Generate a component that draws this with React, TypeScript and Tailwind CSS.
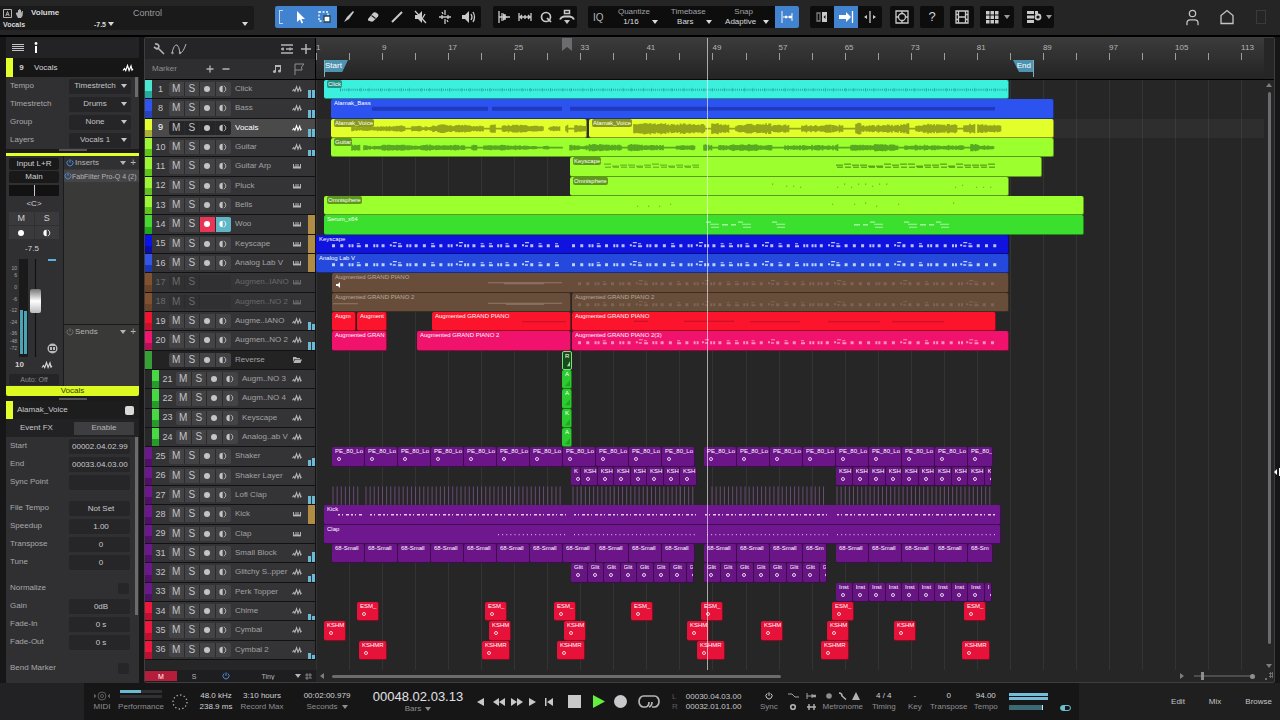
import { useState } from 'react'
import type { ReactNode } from 'react'
import { User } from 'lucide-react'

// Lanes are laid out on a 948 unit wide time axis that starts at bar 1
const LANE_WIDTH = 948
const BAR = 8.26

const pct = (n: number) => `${(n / LANE_WIDTH) * 100}%`
const noise = (n: number) => {
  const v = Math.sin(n * 12.9898) * 43758.5453
  return v - Math.floor(v)
}

type Clip = {
  x: number
  w: number
  label: string
  boxed?: boolean
  loop?: boolean
  muted?: boolean
  outline?: boolean
}

type Track = {
  num: string
  name: string
  kind: 'audio' | 'midi' | 'folder'
  strip: string
  base: string
  clip: string
  clips: Clip[]
  art?: ReactNode
  meter?: 'blue' | 'gold'
  levels?: [string, string]
  selected?: boolean
  armed?: boolean
  muted?: boolean
  indent?: boolean
}

function repeat(start: number, step: number, count: number, label: string, lastWidth = step, lastLabel = label): Clip[] {
  return Array.from({ length: count }, (_, i) => ({
    x: start + i * step,
    w: i === count - 1 ? lastWidth : step,
    label: i === count - 1 ? lastLabel : label,
    loop: true,
  }))
}

function at(xs: number[], w: number, label: string): Clip[] {
  return xs.map((x) => ({ x, w, label, loop: true }))
}

function Art({ children }: { children: ReactNode }) {
  return (
    <svg className="pointer-events-none absolute inset-0 h-full w-full" viewBox="0 0 948 19" preserveAspectRatio="none" aria-hidden="true">
      {children}
    </svg>
  )
}

function Wave({ from, to, amp, color, seed }: { from: number; to: number; amp: number; color: string; seed: number }) {
  let d = ''
  for (let x = from; x < to; x += 1.5) {
    const swell = noise(Math.floor(x / 13) + seed)
    const gap = noise(Math.floor(x / 6) + seed * 3) < 0.12
    const h = gap ? 0.8 : amp * (0.35 + 0.45 * swell + 0.35 * noise(x + seed))
    d += `M${x} ${9.5 - h}V${9.5 + h}`
  }
  return <path d={d} stroke={color} strokeWidth="1.6" fill="none" />
}

function Notes({ from, to, color, y = 10, step = BAR }: { from: number; to: number; color: string; y?: number; step?: number }) {
  let d = ''
  let i = 0
  for (let x = from; x < to; x += step) {
    const n = noise(i * 1.7 + 3)
    if (i % 8 === 7) d += `M${x} ${y - 1}h2v2h-2zM${x + 3} ${y - 3}h4v1h-4zM${x + 3} ${y}h3v1.5h-3z`
    else if (n > 0.8) d += `M${x} ${y - 1}h2v3h-2zM${x + 3} ${y - 1}h2v3h-2z`
    else if (n > 0.4) d += `M${x} ${y - 1}h3v3h-3z`
    else d += `M${x} ${y - 2}h3v1h-3zM${x} ${y}h4v2h-4z`
    i++
  }
  return <path d={d} fill={color} />
}

function Dashes({ from, to, color, y }: { from: number; to: number; color: string; y: number }) {
  let d = ''
  for (let x = from; x < to; x += 8) {
    const o = Math.floor(noise(x) * 3)
    d += `M${x} ${y + o - 1}h7M${x + 1} ${y + 2}h6`
  }
  return <path d={d} stroke={color} strokeWidth="0.9" />
}

function Specks({ from, to, color, y = 9, step = 7 }: { from: number; to: number; color: string; y?: number; step?: number }) {
  let d = ''
  for (let x = from; x < to; x += step) {
    if (noise(x * 2) > 0.35) d += `M${x} ${y + Math.floor(noise(x) * 4) - 2}h1.2`
  }
  return <path d={d} stroke={color} strokeWidth="1" />
}

function Motif({ xs }: { xs: number[] }) {
  const d = xs.map((x) => `M${x} 7h5M${x + 4} 9h9M${x + 5} 12h8`).join('')
  return <path d={d} stroke="#a6f5a0" strokeWidth="1" />
}

function Slices() {
  const spans = [[17, 42], [50, 247], [257, 379], [396, 511], [521, 677]]
  let d = ''
  for (const [a, b] of spans) {
    for (let x = a; x < b; x += 4.13) d += `M${x} 0.5v18`
  }
  return <path d={d} stroke="#74507e" strokeWidth="1" opacity="0.9" />
}

const tracks: Track[] = [
  { num: '1', name: 'Click', kind: 'audio', strip: 'bg-[#4be6d2]', base: 'bg-[#28a79b]', clip: 'bg-[#3cf0de]', meter: 'blue', levels: ['h-2', 'h-2'],
    clips: [{ x: 8, w: 685, label: 'Click', boxed: true }],
    art: <Art><path d="M24 9.500h667" stroke="#1f8a90" strokeWidth="2" strokeDasharray="1 1.1" opacity="0.700" /><path d="M24 9.500h667" stroke="#1f8a90" strokeWidth="4" strokeDasharray="1 7.2 1 11" opacity="0.400" /></Art> },
  { num: '8', name: 'Bass', kind: 'audio', strip: 'bg-[#2f55ee]', base: 'bg-[#2443bd]', clip: 'bg-[#2c52f0]', meter: 'blue', levels: ['h-2', 'h-2'],
    clips: [{ x: 15, w: 723, label: 'Alamak_Bass' }],
    art: <Art><path d="M56 9.500h116M176 9.500h70M254 9.500h140" stroke="#1e3abf" strokeWidth="4" /><path d="M394 9.500h285" stroke="#1e3abf" strokeWidth="3.400" /></Art> },
  { num: '9', name: 'Vocals', kind: 'audio', strip: 'bg-[#e4ff2e]', base: 'bg-[#a9b32d]', clip: 'bg-[#e2ff2c]', meter: 'blue', levels: ['h-2', 'h-2'], selected: true,
    clips: [{ x: 15, w: 256, label: 'Alamak_Voice', boxed: true }, { x: 273, w: 465, label: 'Alamak_Voice', boxed: true }],
    art: <Art><Wave from={36} to={122} amp={3} color="#94a61a" seed={4} /><Wave from={122} to={228} amp={4} color="#94a61a" seed={7} /><Wave from={233} to={245} amp={4} color="#94a61a" seed={9} /><Wave from={250} to={270} amp={4} color="#94a61a" seed={3} /><Wave from={318} to={516} amp={5} color="#94a61a" seed={11} /><Wave from={516} to={660} amp={5.600} color="#94a61a" seed={21} /><Wave from={662} to={686} amp={4.500} color="#94a61a" seed={2} /></Art> },
  { num: '10', name: 'Guitar', kind: 'audio', strip: 'bg-[#9cf535]', base: 'bg-[#5fc51b]', clip: 'bg-[#9cff2e]', meter: 'blue', levels: ['h-1.5', 'h-1.5'],
    clips: [{ x: 15, w: 723, label: 'Guitar', boxed: true }],
    art: <Art><Wave from={36} to={44} amp={4} color="#58a821" seed={5} /><Wave from={48} to={247} amp={2.800} color="#58a821" seed={8} /><Wave from={254} to={380} amp={3.400} color="#58a821" seed={31} /><Wave from={388} to={678} amp={3.400} color="#58a821" seed={12} /></Art> },
  { num: '11', name: 'Guitar Arp', kind: 'midi', strip: 'bg-[#9cf535]', base: 'bg-[#5fc51b]', clip: 'bg-[#9cff2e]',
    clips: [{ x: 254, w: 472, label: 'Keyscape', boxed: true }],
    art: <Art><Dashes from={288} to={377} color="#579a1f" y={8} /><Dashes from={520} to={676} color="#3e7c14" y={8} /></Art> },
  { num: '12', name: 'Pluck', kind: 'midi', strip: 'bg-[#9cf535]', base: 'bg-[#5fc51b]', clip: 'bg-[#9cff2e]',
    clips: [{ x: 254, w: 439, label: 'Omnisphere', boxed: true }],
    art: <Art><Specks from={456} to={490} color="#64ad28" /><Specks from={521} to={575} color="#64ad28" /><Specks from={590} to={680} color="#64ad28" /></Art> },
  { num: '13', name: 'Bells', kind: 'midi', strip: 'bg-[#9cf535]', base: 'bg-[#5fc51b]', clip: 'bg-[#9cff2e]',
    clips: [{ x: 8, w: 760, label: 'Omnisphere', boxed: true }],
    art: <Art><Specks from={321} to={360} color="#64ad28" step={11} /><Specks from={505} to={645} color="#64ad28" step={11} /></Art> },
  { num: '14', name: 'Woo', kind: 'midi', strip: 'bg-[#46d82e]', base: 'bg-[#1ea81c]', clip: 'bg-[#3be02e]', meter: 'gold', armed: true,
    clips: [{ x: 8, w: 760, label: 'Serum_x64' }],
    art: <Art><Motif xs={[390, 422, 456, 554, 588, 620]} /><path d="M406 9.500h6M415 9.500h5M538 9.500h6M547 9.500h5M604 9.500h6M613 9.500h5" stroke="#a6f5a0" strokeWidth="1.500" /></Art> },
  { num: '15', name: 'Keyscape', kind: 'midi', strip: 'bg-[#0d12e8]', base: 'bg-[#090cae]', clip: 'bg-[#1013dd]', meter: 'gold',
    clips: [{ x: 0, w: 693, label: 'Keyscape' }],
    art: <Art><Notes from={16} to={244} color="#b9c4ff" /><Notes from={256} to={679} color="#b9c4ff" /></Art> },
  { num: '16', name: 'Analog Lab V', kind: 'midi', strip: 'bg-[#3355e8]', base: 'bg-[#1c37b4]', clip: 'bg-[#2449dc]', meter: 'gold',
    clips: [{ x: 0, w: 693, label: 'Analog Lab V' }],
    art: <Art><Notes from={16} to={244} color="#bfd4ff" /><Notes from={256} to={679} color="#bfd4ff" /></Art> },
  { num: '17', name: 'Augmen..IANO', kind: 'midi', strip: 'bg-[#84512f]', base: 'bg-[#6b4326]', clip: 'bg-[#684d3a]', muted: true,
    clips: [{ x: 16, w: 677, label: 'Augmented GRAND PIANO', muted: true }],
    art: <Art><path d="M172 9.500h74" stroke="#927a69" strokeWidth="1" /><path d="M188 10.500h40" stroke="#927a69" strokeWidth="1" /><Notes from={262} to={679} color="#7d6654" y={10} /></Art> },
  { num: '18', name: 'Augmen..NO 2', kind: 'midi', strip: 'bg-[#84512f]', base: 'bg-[#6b4326]', clip: 'bg-[#684d3a]', muted: true,
    clips: [{ x: 16, w: 239, label: 'Augmented GRAND PIANO 2' }, { x: 256, w: 437, label: 'Augmented GRAND PIANO 2' }],
    art: <Art><path d="M17 10.500h25M172 10h74" stroke="#927a69" strokeWidth="1" /><path d="M190 11h38" stroke="#927a69" strokeWidth="1" /><Notes from={262} to={679} color="#7d6654" y={11} /></Art> },
  { num: '19', name: 'Augme..IANO', kind: 'audio', strip: 'bg-[#f0142c]', base: 'bg-[#c90f2b]', clip: 'bg-[#fb142c]', meter: 'blue', levels: ['h-2', 'h-1.5'],
    clips: [{ x: 16, w: 24, label: 'Augm' }, { x: 41, w: 30, label: 'Augment' }, { x: 116, w: 139, label: 'Augmented GRAND PIANO' }, { x: 256, w: 424, label: 'Augmented GRAND PIANO' }],
    art: <Art><path d="M206 9.500h44M318 9h14M368 9h50M434 9.500h50M512 9.500h52M576 9.500h52" stroke="#c20f28" strokeWidth="1" /></Art> },
  { num: '20', name: 'Augmen..NO 2', kind: 'audio', strip: 'bg-[#f2146f]', base: 'bg-[#b80e55]', clip: 'bg-[#f0126c]', meter: 'blue', levels: ['h-2', 'h-2'],
    clips: [{ x: 16, w: 55, label: 'Augmented GRAN' }, { x: 101, w: 154, label: 'Augmented GRAND PIANO 2' }, { x: 256, w: 437, label: 'Augmented GRAND PIANO 2(3)' }],
    art: <Art><Notes from={262} to={679} color="#ff8fbc" y={11} /></Art> },
  { num: '', name: 'Reverse', kind: 'folder', strip: 'bg-[#37a035]', base: 'bg-[#37a035]', clip: 'bg-[#174d1d]',
    clips: [{ x: 246, w: 10, label: 'R', outline: true }],
    art: <Art><path d="M251 15l3-5v5z" fill="#9be89b" /></Art> },
  { num: '21', name: 'Augm..NO 3', kind: 'audio', strip: 'bg-[#46d944]', base: 'bg-[#279c2a]', clip: 'bg-[#2ccb30]', indent: true, clips: [{ x: 246, w: 10, label: 'A' }],
    art: <Art><path d="M249 16l5-6v6z" fill="#22a526" /></Art> },
  { num: '22', name: 'Augm..NO 4', kind: 'audio', strip: 'bg-[#46d944]', base: 'bg-[#279c2a]', clip: 'bg-[#2ccb30]', indent: true, clips: [{ x: 246, w: 10, label: 'A' }],
    art: <Art><path d="M249 16l5-6v6z" fill="#22a526" /></Art> },
  { num: '23', name: 'Keyscape', kind: 'audio', strip: 'bg-[#46d944]', base: 'bg-[#279c2a]', clip: 'bg-[#2ccb30]', indent: true, clips: [{ x: 246, w: 10, label: 'K' }],
    art: <Art><path d="M249 16l5-6v6z" fill="#22a526" /></Art> },
  { num: '24', name: 'Analog..ab V', kind: 'audio', strip: 'bg-[#46d944]', base: 'bg-[#279c2a]', clip: 'bg-[#2ccb30]', indent: true, clips: [{ x: 246, w: 10, label: 'A' }],
    art: <Art><path d="M249 16l5-6v6z" fill="#22a526" /></Art> },
  { num: '25', name: 'Shaker', kind: 'audio', strip: 'bg-[#6c188c]', base: 'bg-[#501068]', clip: 'bg-[#6b1588]', meter: 'blue', levels: ['h-1.5', 'h-2'],
    clips: [...repeat(16, 33, 11, 'PE_80_Lo'), ...repeat(388, 33, 9, 'PE_80_Lo', 25, 'PE_80_')] },
  { num: '26', name: 'Shaker Layer', kind: 'audio', strip: 'bg-[#6c188c]', base: 'bg-[#501068]', clip: 'bg-[#671583]',
    clips: [{ x: 255, w: 10, label: 'K', loop: true }, ...repeat(265, 16.5, 7, 'KSH'), ...repeat(520, 16.5, 10, 'KSH', 8, 'K')] },
  { num: '27', name: 'Lofi Clap', kind: 'audio', strip: 'bg-[#6c188c]', base: 'bg-[#501068]', clip: 'bg-[#6b1588]', meter: 'blue', levels: ['h-2', 'h-2'], clips: [], art: <Art><Slices /></Art> },
  { num: '28', name: 'Kick', kind: 'midi', strip: 'bg-[#6c188c]', base: 'bg-[#501068]', clip: 'bg-[#6f178f]', meter: 'gold',
    clips: [{ x: 8, w: 677, label: 'Kick' }],
    art: <Art><path d="M22 9.500h26M54 9.500h196M258 9.500h122M389 9.500h122M521 9.500h158" stroke="#e7c8f0" strokeWidth="1.400" strokeDasharray="2 2 1 3 3 2" /></Art> },
  { num: '29', name: 'Clap', kind: 'midi', strip: 'bg-[#6c188c]', base: 'bg-[#501068]', clip: 'bg-[#6f178f]',
    clips: [{ x: 8, w: 677, label: 'Clap' }],
    art: <Art><path d="M182 9.500h68M258 9.500h122M391 9.500h122M521 9.500h158" stroke="#d9a8e6" strokeWidth="1.200" strokeDasharray="1 3.13" /></Art> },
  { num: '31', name: 'Small Block', kind: 'audio', strip: 'bg-[#6c188c]', base: 'bg-[#501068]', clip: 'bg-[#6b1588]', meter: 'blue', levels: ['h-1.5', 'h-2.5'],
    clips: [...repeat(16, 33, 11, '68-Small'), ...repeat(388, 33, 4, '68-Small', 24, '68-Sm'), ...repeat(520, 33, 5, '68-Small', 25, '68-Sm')].map((c) => ({ ...c, loop: false })) },
  { num: '32', name: 'Glitchy S..pper', kind: 'audio', strip: 'bg-[#6c188c]', base: 'bg-[#501068]', clip: 'bg-[#671583]', meter: 'blue', levels: ['h-1.5', 'h-2'],
    clips: [...repeat(255, 16.5, 8, 'Glit', 8, 'G'), ...repeat(388, 16.5, 8, 'Glit', 8, 'G')] },
  { num: '33', name: 'Perk Topper', kind: 'audio', strip: 'bg-[#6c188c]', base: 'bg-[#501068]', clip: 'bg-[#671583]',
    clips: repeat(520, 16.5, 10, 'Inst', 8, 'I') },
  { num: '34', name: 'Chime', kind: 'audio', strip: 'bg-[#f0163c]', base: 'bg-[#bd1030]', clip: 'bg-[#e6123a]', meter: 'blue', levels: ['h-1.5', 'h-1'],
    clips: at([41, 169, 238, 315, 385, 516, 648], 22, 'ESM_') },
  { num: '35', name: 'Cymbal', kind: 'audio', strip: 'bg-[#f0163c]', base: 'bg-[#bd1030]', clip: 'bg-[#e6123a]',
    clips: at([8, 173, 248, 371, 445, 511, 578], 22, 'KSHM') },
  { num: '36', name: 'Cymbal 2', kind: 'audio', strip: 'bg-[#f0163c]', base: 'bg-[#bd1030]', clip: 'bg-[#e6123a]', meter: 'blue', levels: ['h-1.5', 'h-1'],
    clips: at([43, 166, 241, 381, 505, 646], 28, 'KSHMR') },
]

function WaveIcon({ className = 'h-2 w-2.5' }: { className?: string }) {
  return (
    <svg className={className} viewBox="0 0 11 8" fill="none" stroke="currentColor" strokeWidth="1.2" aria-hidden="true">
      <path d="M0.5 6.5 2 4.5l1.2 2L5 1.5l1.6 5L8.5 2l1 4 1-1" />
    </svg>
  )
}

function PianoIcon() {
  return (
    <svg className="h-2 w-2.5" viewBox="0 0 10 8" fill="none" stroke="currentColor" aria-hidden="true">
      <path d="M1.5 2v4M4 2v3M6 2v3M8.500 2v4" />
      <path d="M1 5.500h8" strokeWidth="1.800" />
    </svg>
  )
}

function FolderIcon() {
  return (
    <svg className="h-2 w-2.5" viewBox="0 0 10 8" fill="currentColor" aria-hidden="true">
      <path d="M1 1h3l1 1h3v1H2.5L1 6zM3 3.6h7L8.4 7H1.4z" />
    </svg>
  )
}

function MonitorIcon() {
  return (
    <svg className="h-2 w-2" viewBox="0 0 8 8" aria-hidden="true">
      <path d="M3.6 0.8v6.4A3.2 3.2 0 0 1 3.6 0.8z" fill="currentColor" />
      <path d="M4.8 1c2.6 1 2.6 5 0 6" fill="none" stroke="currentColor" strokeWidth="0.9" />
    </svg>
  )
}

function Dot() {
  return <span className="size-1.5 rounded-full bg-current" />
}

function Caret() {
  return (
    <svg className="h-1 w-1.5 shrink-0" viewBox="0 0 6 4" fill="currentColor" aria-hidden="true">
      <path d="M0 0h6L3 4z" />
    </svg>
  )
}

function PowerIcon() {
  return (
    <svg className="size-2 shrink-0" viewBox="0 0 8 8" fill="none" stroke="currentColor" aria-hidden="true">
      <path d="M2.2 1.5a3 3 0 1 0 3.6 0M4 0.3v3.6" />
    </svg>
  )
}

function TrackHeader({ track }: { track: Track }) {
  const tone = track.muted ? 'text-[#6a6a6c]' : 'text-[#c4c4c6]'
  const cell = 'flex h-full items-center justify-center border-r border-[#2b2b2d]'
  return (
    <div className={`flex w-[171px] shrink-0 items-stretch border-b border-[#121213] ${track.selected ? 'bg-[#4a4a4b]' : track.kind === 'folder' ? 'bg-[#232324]' : 'bg-[#343436]'}`}>
      {track.indent && <div className="w-[7px] shrink-0 bg-[#28282a]" />}
      <div className={`flex w-[7px] shrink-0 flex-col justify-end ${track.strip}`}>
        <div className={`h-[7px] ${track.base}`} />
      </div>
      <div className={`flex w-[17px] shrink-0 items-center justify-center text-[9px] leading-none ${track.selected ? 'text-white' : tone}`}>{track.num}</div>
      <div className={`my-[2px] grid w-[62px] shrink-0 grid-cols-4 overflow-hidden rounded-[2px] text-[10px] leading-none ${tone} ${track.selected ? 'bg-[#262628]' : track.muted ? 'bg-[#303032]' : 'bg-[#434345]'}`}>
        <button className={cell} aria-label={`Mute ${track.name}`}>M</button>
        <button className={cell} aria-label={`Solo ${track.name}`}>S</button>
        <button className={`${cell} ${track.armed ? 'bg-[#ea3556] text-white' : ''} ${track.muted ? 'opacity-0' : ''}`} aria-label={`Record ${track.name}`}><Dot /></button>
        <button className={`flex h-full items-center justify-center ${track.armed ? 'bg-[#5fb6c6] text-white' : ''} ${track.muted ? 'opacity-0' : ''}`} aria-label={`Monitor ${track.name}`}><MonitorIcon /></button>
      </div>
      <div className={`ml-1 flex min-w-0 flex-1 items-center whitespace-nowrap text-[8px] leading-none ${track.selected ? 'text-white' : track.muted ? 'text-[#68686a]' : 'text-[#a2a2a4]'}`}>{track.name}</div>
      <div className={`mr-1.5 flex w-2.5 shrink-0 items-center ${track.selected ? 'text-white' : track.muted ? 'text-[#6a6a6c]' : 'text-[#b4b4b6]'}`}>
        {track.kind === 'audio' ? <WaveIcon /> : track.kind === 'midi' ? <PianoIcon /> : <FolderIcon />}
      </div>
      <div className={`flex w-2 shrink-0 items-end gap-px border-r border-[#121213] ${track.meter === 'gold' ? 'bg-[#b08c45]' : ''}`}>
        {track.levels?.map((level, i) => <span key={i} className={`w-[3px] bg-[#6bbbd6] ${level}`} />)}
      </div>
    </div>
  )
}

function ClipBox({ clip, track }: { clip: Clip; track: Track }) {
  const edge = clip.outline ? 'border border-[#7de07d] pl-[2px]' : 'border-r border-b border-black/40 pl-[3px]'
  return (
    <div
      className={`absolute inset-y-0 overflow-hidden rounded-[2px] ${track.clip} ${edge}`}
      style={{ left: pct(clip.x), width: pct(clip.w) }}
    >
      <div className={`overflow-hidden text-[6px] leading-[9px] font-medium whitespace-nowrap ${track.muted ? 'text-[#b7a99e]' : 'text-white'}`}>
        {clip.boxed ? <span className="inline-block rounded-[2px] bg-black/40 px-px leading-[8px]">{clip.label}</span> : clip.label}
      </div>
      {clip.loop && <div className="mt-px ml-[2px] size-1 rounded-full border border-white/80" />}
      {clip.muted && (
        <svg className="ml-px size-1.5" viewBox="0 0 6 6" fill="#fff" aria-hidden="true"><path d="M0 2h2l2-2v6L2 4H0zM4.6 1.5l1 3" /></svg>
      )}
    </div>
  )
}

function Field({ label, value, wide }: { label: string; value: string; wide?: boolean }) {
  return (
    <label className="flex h-[18px] items-center justify-between pr-[5px] pl-1">
      <span>{label}</span>
      <input
        defaultValue={value}
        className={`h-[15px] w-[61px] rounded-[2px] bg-[#262628] pl-[3px] text-[#c9c9cb] outline-none ${wide ? 'text-left' : 'text-center'}`}
      />
    </label>
  )
}

function Check({ label }: { label: string }) {
  return (
    <label className="mt-2 flex h-[18px] items-center justify-between pr-[6px] pl-1">
      <span>{label}</span>
      <input type="checkbox" className="size-[11px] appearance-none rounded-[2px] bg-[#262628]" />
    </label>
  )
}

function Choice({ label, value }: { label: string; value: string }) {
  return (
    <label className="flex h-[18px] items-center justify-between pr-1 pl-1">
      <span>{label}</span>
      <span className="flex h-[15px] w-[62px] items-center rounded-[2px] bg-[#252527] pr-1 text-[#c4c4c6]">
        <select className="h-full min-w-0 flex-1 appearance-none bg-transparent outline-none [text-align-last:center]">
          <option>{value}</option>
        </select>
        <Caret />
      </span>
    </label>
  )
}

function Channel() {
  const box = 'flex h-[12px] items-center justify-center rounded-[2px] bg-[#19191a]'
  return (
    <div className="flex h-[233px] shrink-0 border-t-[3px] border-[#e2ff2c] bg-[#303032] text-[8px] leading-none text-[#d2d2d4]">
      <div className="flex w-14 shrink-0 flex-col px-[3px] pt-[2px]">
        <button className={box}>Input L+R</button>
        <button className={`${box} mt-px`}>Main</button>
        <div className="mt-[2px] flex h-[11px] justify-center bg-[#121213]"><span className="w-px bg-[#c9c9cb]" /></div>
        <div className="flex h-[16px] items-center justify-center">&lt;C&gt;</div>
        <div className="grid grid-cols-2 gap-px text-[9px]">
          <button className="flex h-[13px] items-center justify-center bg-[#3a3a3c]" aria-label="Mute channel">M</button>
          <button className="flex h-[13px] items-center justify-center bg-[#3a3a3c]" aria-label="Solo channel">S</button>
          <button className="flex h-[13px] items-center justify-center bg-[#3a3a3c] text-white" aria-label="Record channel"><Dot /></button>
          <button className="flex h-[13px] items-center justify-center bg-[#3a3a3c] text-white" aria-label="Monitor channel"><MonitorIcon /></button>
        </div>
        <div className="flex h-[20px] items-center justify-center pr-1">-7.5</div>
        <div className="flex h-[98px]">
          <div className="flex w-2 flex-col pt-1.5 text-right text-[5px] leading-[7px] text-[#a5a5a7]">
            <span>10</span><span>6</span><span className="mt-[5px]">0</span><span className="mt-[5px]">-6</span><span className="mt-1">-12</span><span className="mt-[5px]">-24</span><span className="mt-1">-36</span><span className="mt-px">-48</span><span>-72</span>
          </div>
          <div className="ml-[2px] flex w-[9px] items-end gap-px bg-[#1a1a1b] px-px pb-[3px]">
            <span className="h-[44px] w-[3px] bg-[#4ba3b4]" />
            <span className="h-[43px] w-[3px] bg-[#4ba3b4]" />
          </div>
          <input
            type="range"
            aria-label="Channel volume"
            defaultValue={60}
            className="ml-[2px] h-[98px] w-[11px] appearance-none bg-transparent bg-linear-to-r from-transparent from-40% via-[#111] via-50% to-transparent to-60% [direction:rtl] [writing-mode:vertical-lr] [&::-webkit-slider-thumb]:h-[24px] [&::-webkit-slider-thumb]:w-[11px] [&::-webkit-slider-thumb]:appearance-none [&::-webkit-slider-thumb]:rounded-[2px] [&::-webkit-slider-thumb]:bg-linear-to-b [&::-webkit-slider-thumb]:from-[#777] [&::-webkit-slider-thumb]:via-white [&::-webkit-slider-thumb]:to-[#bbb]"
          />
          <div className="ml-1 flex flex-1 flex-col items-center justify-between pb-[3px]">
            <span className="h-[2px] w-2 bg-[#5ab0d8]" />
            <svg className="size-[11px]" viewBox="0 0 11 11" aria-hidden="true"><circle cx="5.5" cy="5.5" r="5" fill="#b9b9bb" /><path d="M2.5 3.5h6v4h-6zM5.5 3.5v4" fill="none" stroke="#333" /></svg>
          </div>
        </div>
        <div className="mt-1 flex items-center justify-between px-1.5 font-bold">
          <span>10</span><WaveIcon className="h-2 w-3" />
        </div>
        <button className="mt-[5px] flex h-[11px] items-center justify-center rounded-[2px] bg-[#252527] text-[7px] text-[#8a8a8c]">Auto: Off</button>
      </div>
      <div className="ml-px flex min-w-0 flex-1 flex-col border-l border-[#1b1b1c] bg-[#393937] text-[#b4b4b6]">
        <div className="flex h-[13px] items-center bg-[#303032] pr-[3px]">
          <span className="ml-[2px] text-[#4f8bd6]"><PowerIcon /></span>
          <span className="ml-px flex-1">Inserts</span>
          <Caret /><button className="ml-1 text-[10px] leading-none" aria-label="Add insert">+</button>
        </div>
        <button className="mt-px flex h-[12px] items-center bg-[#454547] text-[7px] whitespace-nowrap">
          <span className="text-[#4f8bd6]"><PowerIcon /></span>FabFilter Pro-Q 4 (2)
        </button>
        <div className="mt-auto flex h-[62px] flex-col border-t border-[#1b1b1c]">
          <div className="flex h-[13px] items-center pr-[3px]">
            <span className="ml-[2px] text-[#6f6f71]"><PowerIcon /></span>
            <span className="ml-px flex-1">Sends</span>
            <Caret /><button className="ml-1 text-[10px] leading-none" aria-label="Add send">+</button>
          </div>
        </div>
      </div>
    </div>
  )
}

function Inspector() {
  return (
    <aside className="flex w-[133px] shrink-0 flex-col overflow-hidden bg-[#303032] text-[8px] leading-none text-[#a8a8aa]">
      <div className="flex h-[21px] shrink-0 items-center bg-[#232325] pl-1.5 text-[#c4c4c6]">
        <svg className="h-[7px] w-3" viewBox="0 0 12 7" stroke="currentColor" aria-hidden="true"><path d="M0 .5h12M0 2.500h12M0 4.500h12M0 6.500h12" /></svg>
        <svg className="ml-2.5 h-[11px] w-1" viewBox="0 0 4 11" fill="#fff" aria-hidden="true"><circle cx="2" cy="1.5" r="1.4" /><path d="M1 4h2v7H1z" /></svg>
      </div>
      <div className="flex h-[19px] shrink-0 items-center bg-[#161617] pr-[5px] text-[#d2d2d4]">
        <span className="h-full w-[7px] bg-[#e2ff2c]" />
        <span className="w-[17px] text-center font-bold">9</span>
        <span className="ml-1 flex-1">Vocals</span>
        <span className="text-white"><WaveIcon className="h-2 w-3" /></span>
      </div>
      <div className="flex h-[72px] shrink-0">
        <div className="flex-1">
          <Choice label="Tempo" value="Timestretch" />
          <Choice label="Timestretch" value="Drums" />
          <Choice label="Group" value="None" />
          <Choice label="Layers" value="Vocals 1" />
        </div>
        <div className="w-[4px]"><div className="h-5 w-[3px] bg-[#6c6c6e]" /></div>
      </div>
      <div className="flex h-[4px] shrink-0 justify-center bg-[#1b1b1c]"><span className="h-[2px] w-7 bg-[#555]" /></div>
      <Channel />
      <div className="flex h-[10px] shrink-0 items-center justify-center rounded-b-[2px] bg-[#dcfa22] text-[#333a08]">Vocals</div>
      <div className="flex h-[5px] shrink-0 items-center justify-center bg-[#1b1b1c]"><span className="h-[2px] w-7 bg-[#555]" /></div>
      <div className="flex h-[18px] shrink-0 items-center bg-[#1d1d1e] pr-[5px] text-[#c9c9cb]">
        <span className="h-full w-[7px] bg-[#e2ff2c]" />
        <label htmlFor="clip-color" className="ml-1 flex-1">Alamak_Voice</label>
        <input id="clip-color" type="checkbox" className="size-[9px] appearance-none rounded-[2px] bg-[#d9d9d5]" />
      </div>
      <div className="flex h-[18px] shrink-0 items-center justify-between bg-[#222224] pr-[5px] pl-3.5 text-[#c9c9cb]">
        <span>Event FX</span>
        <button className="h-[13px] w-[60px] bg-[#3e3e40] text-[#b4b4b6]">Enable</button>
      </div>
      <div className="flex min-h-0 flex-1">
        <div className="flex-1">
          <Field label="Start" value="00002.04.02.99" wide />
          <Field label="End" value="00033.04.03.00" wide />
          <Field label="Sync Point" value="" />
          <div className="h-2" />
          <Field label="File Tempo" value="Not Set" />
          <Field label="Speedup" value="1.00" />
          <Field label="Transpose" value="0" />
          <Field label="Tune" value="0" />
          <Check label="Normalize" />
          <Field label="Gain" value="0dB" />
          <Field label="Fade-In" value="0 s" />
          <Field label="Fade-Out" value="0 s" />
          <Check label="Bend Marker" />
        </div>
        <div className="w-[4px]"><div className="h-[178px] w-[3px] bg-[#6c6c6e]" /></div>
      </div>
    </aside>
  )
}

function Tool({ label, active, wide, children }: { label: string; active?: boolean; wide?: boolean; children: ReactNode }) {
  return (
    <button aria-label={label} className={`flex h-full items-center justify-center ${wide ? 'w-[26px]' : 'w-6'} ${active ? 'bg-[#4283cf] text-white' : 'text-[#c9c9cb]'}`}>
      <svg className="size-4" viewBox="0 0 16 16" fill="none" stroke="currentColor" strokeWidth="1.3" aria-hidden="true">{children}</svg>
    </button>
  )
}

function Setting({ label, value, width }: { label: string; value: string; width: string }) {
  return (
    <label className={`flex flex-col items-center text-[8px] leading-none ${width}`}>
      <span className="text-[#a2a2a4]">{label}</span>
      <span className="mt-0.5 flex w-full items-center text-[#dcdcde]">
        <select className="min-w-0 flex-1 appearance-none bg-transparent leading-none outline-none [text-align-last:center]">
          <option>{value}</option>
        </select>
        <Caret />
      </span>
    </label>
  )
}

function Toolbar() {
  const group = 'flex h-[22px] shrink-0 items-center overflow-hidden rounded-[2px] bg-[#0d0d0e]'
  return (
    <header className="flex h-[37px] shrink-0 items-start border-b-2 border-black bg-[#262526] pt-[6px]">
      <div className="flex h-[24px] w-[254px] shrink-0 rounded-r-[2px] bg-[#1a1a1b] pl-[3px] text-[8px] leading-none text-[#d9d9db]">
        <div className="flex w-[111px] flex-col justify-center">
          <div className="flex items-center font-bold">
            <svg className="size-[9px]" viewBox="0 0 9 9" fill="none" stroke="#b4b4b6" aria-hidden="true"><path d="M.5.5h8v8h-8zM2.8 7l1.7-4.5L6.2 7M3.3 5.6h2.4" /></svg>
            <svg className="mx-[3px] size-[9px]" viewBox="0 0 9 9" fill="#b4b4b6" aria-hidden="true"><path d="M2 3l1 1V1h1v2.5V.3h1v3.2V.8h1V4l1-2h1L7.5 7 6 9H3L.8 4.5z" /></svg>
            <span className="ml-1">Volume</span>
          </div>
          <div className="mt-[3px] flex items-center justify-between text-[7px] font-bold"><span>Vocals</span><span className="flex items-center gap-0.5">-7.5<Caret /></span></div>
        </div>
        <div className="flex flex-1 flex-col justify-between pt-[3px] pb-1 pr-[6px] pl-[19px]">
          <span className="text-[9px] text-[#9c9c9e]">Control</span>
          <span className="self-end"><Caret /></span>
        </div>
      </div>
      <div className={`${group} ml-[21px]`}>
        <div className="flex h-full w-3 items-center bg-[#4283cf] pl-1"><span className="h-3.5 w-1 border border-r-0 border-[#bcd6f5]" /></div>
        <Tool label="Arrow" active wide><path d="M5 2v11l3-2.5 1.6 4 1.6-.8-1.7-3.6H13z" fill="currentColor" stroke="none" /></Tool>
        <Tool label="Range" active><path d="M2 3h9v9H2z" strokeDasharray="2 1.5" /><path d="M7 7h6v6H7z" fill="currentColor" stroke="#245" /></Tool>
        <Tool label="Split"><path d="M3 13l3-5 6-6 1 1-5 7z" fill="currentColor" stroke="none" /></Tool>
        <Tool label="Eraser"><path d="M3 10l5-6q1-1 3-.5l2 1.5q1 1 0 2.500L8.500 12q-1 1-2.500.5L3 11.500z" fill="currentColor" stroke="none" /><path d="M6.500 6.500l4 3" stroke="#222" /></Tool>
        <Tool label="Paint"><path d="M3 13l10-10" strokeWidth="2" /></Tool>
        <Tool label="Mute"><path d="M2 6h3l4-4v12L5 10H2z" fill="currentColor" stroke="none" /><path d="M2 2l11 12M12 5l-3 5" /></Tool>
        <Tool label="Bend"><path d="M8 1v5M8 10v5M2 8h12M5 6v4M11 6v4M5 3l1 2M11 13l-1-2" /></Tool>
        <Tool label="Listen"><path d="M1 6h3l4-4v12L4 10H1z" fill="currentColor" stroke="none" /><path d="M10 5q2 3 0 6M12 3q3 5 0 10" /></Tool>
      </div>
      <div className={`${group} ml-[12px] w-[84px] justify-around`}>
        <Tool label="Strip silence"><path d="M3 2v12M6 4v8M9 5v6M3 8h11" /><path d="M7 4l4 4-4 4z" fill="currentColor" stroke="none" /></Tool>
        <Tool label="Snap width"><path d="M2 4v8M14 4v8M2 8h12M5 6L3 8l2 2M11 6l2 2-2 2M8 6v4" /></Tool>
        <Tool label="Quantize"><circle cx="8" cy="8" r="4.500" strokeWidth="1.700" /><path d="M9 9l4 4" strokeWidth="1.700" /></Tool>
        <Tool label="Macro"><path d="M5.500 1.500h5v3h-5z" strokeWidth="1.500" /><path d="M1 10.500Q2 8 5 7.500h6q3 .5 4 3" strokeWidth="2" /><path d="M5 11h6l-3 4z" fill="currentColor" stroke="none" /></Tool>
      </div>
      <div className={`${group} ml-[11px] w-[211px] justify-between pl-[5px]`}>
        <span className="text-[10px] text-[#b4b4b6]">IQ</span>
        <Setting label="Quantize" value="1/16" width="w-[48px]" />
        <Setting label="Timebase" value="Bars" width="w-[48px]" />
        <Setting label="Snap" value="Adaptive" width="w-[50px]" />
        <Tool label="Snap" active><path d="M3 2v12M13 4v8M4 8h8" opacity=".7" /><path d="M6 8h2M10 8h3" strokeWidth="2.500" /></Tool>
      </div>
      <div className={`${group} ml-[11px]`}>
        <Tool label="Preroll"><path d="M3 4h3v8H3z" opacity=".6" /><path d="M8 3h5v10H8z" fill="currentColor" stroke="none" /><path d="M11.500 6v4L9.500 8z" fill="#111" stroke="none" /></Tool>
        <Tool label="Autoscroll" active><path d="M1 6h7V3l5 5-5 5v-3H1z" fill="currentColor" stroke="none" /><path d="M14.500 2v12" /></Tool>
        <Tool label="Cursor follow"><path d="M8 2v12" /><path d="M2 8l3-2v4zM14 8l-3-2v4z" fill="currentColor" stroke="none" /></Tool>
      </div>
      <div className={`${group} ml-2`}><Tool label="Locate"><path d="M2 2h12v12H2z" /><circle cx="8" cy="8" r="3.500" /><path d="M8 2v3M8 11v3M2 8h3M11 8h3" /></Tool></div>
      <button className={`${group} ml-1.5 w-6 justify-center text-[13px] text-[#d2d2d4]`} aria-label="Help">?</button>
      <div className={`${group} ml-1.5`}><Tool label="Video"><path d="M2 2h12v12H2zM4.500 2v12M11.500 2v12M2 5.500h2.500M2 10.500h2.500M11.500 5.500H14M11.500 10.500H14M4.500 8h7" /></Tool></div>
      <div className={`${group} ml-1.5 w-[34px] pr-1 text-[#9c9c9e]`}>
        <Tool label="Grid"><g fill="currentColor" stroke="none">{[2, 6.5, 11].map((x) => [2, 6.5, 11].map((y) => <rect key={`${x}${y}`} x={x} y={y} width="3.500" height="3.500" />))}</g></Tool>
        <Caret />
      </div>
      <div className={`${group} ml-2 w-8 pr-0.5 text-[#9c9c9e]`}>
        <Tool label="Setup"><path d="M1 2h7v3H1zM1 6.500h7v3H1zM1 11h7v3H1zM9 2h3v3H9z" fill="currentColor" stroke="none" /><circle cx="12" cy="8" r="2.500" strokeWidth="1.800" /></Tool>
        <Caret />
      </div>
      <div className="mr-[14px] ml-auto flex h-[22px] items-center gap-[17px] text-[#c4c4c6]">
        <button aria-label="Account"><User className="size-[19px]" strokeWidth={1.600} /></button>
        <button aria-label="Start page">
          <svg className="size-4" viewBox="0 0 16 16" fill="none" stroke="currentColor" strokeWidth="1.300" aria-hidden="true"><path d="M2 14.500V6.500L8 1.500l6 5v8z" /></svg>
        </button>
        <span className="ml-1 h-3.5 w-2.5 border border-[#3a3a3c]" />
      </div>
    </header>
  )
}

function Ruler() {
  return (
    <div className="relative h-[41px] flex-1 overflow-hidden bg-linear-to-b from-[#3b3b3c] to-[#242425]">
      {Array.from({ length: 29 }, (_, i) => (
        <div key={i} className="absolute inset-y-0" style={{ left: pct(i * 4 * BAR) }}>
          <span className="absolute top-[15px] h-[7px] w-px bg-[#9c9c9e]" />
          {i % 2 === 0 && <span className="absolute top-[6px] left-0 text-[8px] leading-none text-[#b4b4b6]">{i * 4 + 1}</span>}
        </div>
      ))}
      <svg className="absolute top-0 h-3.5 w-2.5" style={{ left: pct(246) }} viewBox="0 0 10 14" aria-hidden="true"><path d="M0 0h10v13L5 9l-5 4z" fill="#6c6c6e" /></svg>
      <div className="absolute top-[22px] h-[17px] border-l border-[#79aec2]" style={{ left: pct(8) }}>
        <div className="h-[12px] w-[23px] bg-[#4e93b0] text-[8px] leading-[12px] text-white [clip-path:polygon(0_0,100%_0,75%_100%,0_100%)]">Start</div>
      </div>
      <div className="absolute top-[22px] h-[17px] border-r border-[#79aec2]" style={{ left: pct(697) }}>
        <div className="h-[12px] w-[20px] bg-[#4e93b0] pr-0.5 text-right text-[8px] leading-[12px] text-white [clip-path:polygon(0_0,100%_0,100%_100%,30%_100%)]">End</div>
      </div>
    </div>
  )
}

function Arrange() {
  return (
    <main className="ml-[5px] flex min-w-0 flex-1 flex-col overflow-hidden rounded-[2px] border border-[#3e3e40] bg-[#262627]">
      <div className="flex border-b border-black">
        <div className="flex w-[171px] shrink-0 flex-col border-r border-black text-[#b4b4b6]">
          <div className="flex h-[21px] items-center bg-[#252527] px-2">
            <svg className="size-3" viewBox="0 0 12 12" fill="none" stroke="currentColor" strokeWidth="1.600" aria-hidden="true"><path d="M2 1q3-.5 4 2 0 2-2 3L1 4M5.500 5.500L11 11" /></svg>
            <svg className="ml-1.5 h-3 w-4" viewBox="0 0 16 12" fill="none" stroke="currentColor" aria-hidden="true"><path d="M1 10Q3 1 6 2q2 1 3 8 3 0 6-9" /><circle cx="1.500" cy="10" r=".8" /><circle cx="9" cy="10" r=".8" /></svg>
            <svg className="ml-auto h-2.5 w-3" viewBox="0 0 12 10" fill="none" stroke="currentColor" strokeWidth="1.400" aria-hidden="true"><path d="M0 1h12M0 5h3M5 5h7M0 9h12M2 3.500v3M9 3.500v3" /></svg>
            <svg className="ml-2 -mr-1 size-2.5" viewBox="0 0 10 10" stroke="currentColor" strokeWidth="1.500" aria-hidden="true"><path d="M0 5h10M5 0v10" /></svg>
          </div>
          <div className="flex h-5 items-center bg-[#2e2e30] pl-[7px] text-[8px] leading-none">
            <span className="w-[54px] text-[#8e8e90]">Marker</span>
            <svg className="size-2" viewBox="0 0 8 8" stroke="currentColor" strokeWidth="1.300" aria-hidden="true"><path d="M0.500 4h7M4 .5v7" /></svg>
            <svg className="ml-2 size-2" viewBox="0 0 8 8" stroke="currentColor" strokeWidth="1.300" aria-hidden="true"><path d="M0.500 4h7" /></svg>
            <svg className="ml-auto h-2 w-2.5" viewBox="0 0 10 8" fill="currentColor" aria-hidden="true"><path d="M3 0h6v6H8V2H4v5H3z" /><circle cx="2.500" cy="6.500" r="1.500" /><circle cx="7.500" cy="6" r="1.500" /></svg>
            <svg className="mr-[11px] ml-3 h-3 w-2.5" viewBox="0 0 10 12" fill="none" stroke="#8e8e90" aria-hidden="true"><path d="M1 12V1h9L7.500 4 8 7H1" /></svg>
          </div>
        </div>
        <Ruler />
        <div className="w-2.5 shrink-0 bg-[#262627]" />
      </div>
      <div className="flex min-h-0 flex-1">
        <div className="relative flex min-w-0 flex-1 flex-col pb-2.5">
          <div className="absolute inset-y-0 right-0 left-[171px]">
            {Array.from({ length: 29 }, (_, i) => (
              <span key={i} className="absolute inset-y-0 w-px bg-[#333334]" style={{ left: pct(i * 4 * BAR) }} />
            ))}
          </div>
          {tracks.map((track, i) => (
            <div key={i} className="relative flex min-h-0 flex-1">
              <TrackHeader track={track} />
              <div className={`relative min-w-0 flex-1 ${track.selected ? 'bg-white/4' : ''}`}>
                {track.clips.map((clip, j) => <ClipBox key={j} clip={clip} track={track} />)}
                {track.art}
              </div>
            </div>
          ))}
          <div className="pointer-events-none absolute inset-y-0 right-0 left-[171px]">
            <span className="absolute -top-[42px] bottom-0 w-px bg-white/60" style={{ left: pct(391) }} />
          </div>
        </div>
        <div className="flex w-2.5 shrink-0 flex-col items-center pt-[3px] text-[#7d7d7f]">
          <svg className="h-1 w-1.5 shrink-0" viewBox="0 0 6 4" fill="currentColor" aria-hidden="true"><path d="M0 4h6L3 0z" /></svg>
          <span className="mt-[5px] mb-5 w-[3px] flex-1 rounded-full bg-[#6c6c6e]" />
          <span className="mb-0.5"><Caret /></span>
        </div>
      </div>
      <div className="flex h-3 shrink-0 items-center text-[8px] leading-none text-[#b4b4b6]">
        <div className="flex h-full w-[171px] items-center bg-[#1e1e20] text-[7px]">
          <button className="h-[10px] w-8 bg-[#b51d3a] text-white">M</button>
          <button className="w-[34px]">S</button>
          <button className="flex w-[30px] justify-center text-[#4f8bd6]" aria-label="Power"><PowerIcon /></button>
          <label className="flex flex-1 items-center pr-1">
            <select aria-label="Track height" className="flex-1 appearance-none bg-transparent leading-none outline-none [text-align-last:center]"><option>Tiny</option></select>
            <Caret />
          </label>
          <svg className="mr-1 size-[7px]" viewBox="0 0 7 7" fill="none" stroke="currentColor" aria-hidden="true"><path d="M0 2h7M0 5h7M2 0v7M5 0v5" opacity=".6" /></svg>
        </div>
        <svg className="ml-1 h-1.5 w-1" viewBox="0 0 4 6" fill="#7d7d7f" aria-hidden="true"><path d="M4 0v6L0 3z" /></svg>
        <div className="ml-2 flex-1"><div className="h-[3px] w-[53%] rounded-full bg-[#6c6c6e]" /></div>
        <svg className="h-1.5 w-1" viewBox="0 0 4 6" fill="#7d7d7f" aria-hidden="true"><path d="M0 0v6l4-3z" /></svg>
        <input
          type="range"
          aria-label="Zoom"
          defaultValue={12}
          className="ml-2.5 h-2 w-[60px] appearance-none bg-transparent bg-linear-to-b from-transparent from-40% via-[#8e8e90] via-50% to-transparent to-60% [&::-webkit-slider-thumb]:h-2 [&::-webkit-slider-thumb]:w-[3px] [&::-webkit-slider-thumb]:appearance-none [&::-webkit-slider-thumb]:bg-[#8e8e90]"
        />
        <span className="mr-2.5 -ml-1 size-[5px] rounded-full bg-[#8e8e90]" />
        <svg className="mr-px size-2" viewBox="0 0 8 8" fill="#6c6c6e" aria-hidden="true"><path d="M4 1h4v1H4zM4 4h4v1H4zM5 0h1v6H5zM7 0h1v6H7zM0 6h2v2H0z" /></svg>
      </div>
    </main>
  )
}

function Stack({ top, bottom, width }: { top: ReactNode; bottom: ReactNode; width: string }) {
  return (
    <div className={`flex shrink-0 flex-col items-center gap-[3px] text-[8px] leading-none whitespace-nowrap ${width}`}>
      <div className="flex h-2 items-center gap-1.5 text-[#d2d2d4]">{top}</div>
      <div className="flex h-2 items-center gap-1 text-[#8e8e90]">{bottom}</div>
    </div>
  )
}

function Transport() {
  const [playing, setPlaying] = useState(true)
  const icon = 'h-2.5 w-3'
  return (
    <footer className="flex h-[37px] shrink-0 items-center bg-[#161617]">
      <div className="h-full w-[84px] shrink-0 bg-[#222224]" />
      <Stack width="w-9" bottom="MIDI" top={<svg className="h-2.5 w-4 text-[#5a5a5c]" viewBox="0 0 16 10" fill="none" stroke="currentColor" aria-hidden="true"><circle cx="8" cy="5" r="4" /><circle cx="8" cy="5" r="1.500" /><path d="M0 3l2 2-2 2zM16 3l-2 2 2 2z" fill="currentColor" /></svg>} />
      <Stack width="w-[42px]" bottom="Performance" top={
        <span className="mb-1 flex w-[42px] flex-col gap-[2px]">
          <span className="h-[3px] bg-[#303032]"><span className="block h-full w-1/2 bg-[#6bbbd0]" /></span>
          <span className="h-[3px] bg-[#303032]" />
        </span>
      } />
      <svg className="mx-2.5 size-4 shrink-0" viewBox="0 0 16 16" fill="none" stroke="#b4b4b6" strokeWidth="1.300" aria-hidden="true"><circle cx="8" cy="8" r="7" strokeDasharray="1.300 2.360" /></svg>
      <Stack width="w-[36px]" top="48.0 kHz" bottom={<span className="text-[#d2d2d4]">238.9 ms</span>} />
      <Stack width="w-[56px]" top="3:10 hours" bottom="Record Max" />
      <Stack width="w-[74px]" top="00:02:00.979" bottom={<>Seconds <Caret /></>} />
      <div className="ml-2 flex w-[92px] shrink-0 flex-col items-center gap-[3px] text-[13px] leading-none text-[#e2e2e4]">
        <span className="h-3">00048.02.03.13</span>
        <span className="flex items-center gap-1 text-[8px] leading-none text-[#8e8e90]">Bars <Caret /></span>
      </div>
      <div className="ml-[11px] flex shrink-0 items-center gap-[6px] text-[#c9c9cb]">
        <button aria-label="Previous marker"><svg className={icon} viewBox="0 0 12 10" fill="currentColor"><path d="M9 1v8L2 5z" /></svg></button>
        <button aria-label="Rewind"><svg className={icon} viewBox="0 0 12 10" fill="currentColor"><path d="M6 1v8L0 5zM12 1v8L6 5z" /></svg></button>
        <button aria-label="Fast forward"><svg className={icon} viewBox="0 0 12 10" fill="currentColor"><path d="M0 1v8l6-4zM6 1v8l6-4z" /></svg></button>
        <button aria-label="Next marker"><svg className="h-2.5 w-2" viewBox="0 0 8 10" fill="currentColor"><path d="M0 1v8l7-4z" /></svg></button>
        <button aria-label="Return to zero"><svg className={icon} viewBox="0 0 12 10" fill="currentColor"><path d="M2 1h1.500v8H2zM10 1v8L4 5z" /></svg></button>
      </div>
      <button className="ml-[13px] size-[13px] shrink-0 bg-[#c9c9cb]" aria-label="Stop" onClick={() => setPlaying(false)} />
      <button className={`ml-3 shrink-0 ${playing ? 'text-[#62f03c]' : 'text-[#c9c9cb]'}`} aria-label="Play" onClick={() => setPlaying(true)}>
        <svg className="h-[13px] w-3" viewBox="0 0 12 13" fill="currentColor"><path d="M0 0v13l12-6.500z" /></svg>
      </button>
      <button className="ml-[9px] size-[13px] shrink-0 rounded-full bg-[#c9c9cb]" aria-label="Record" />
      <button className="ml-[11px] shrink-0 text-[#b4b4b6]" aria-label="Loop">
        <svg className="h-3.5 w-[22px]" viewBox="0 0 22 14" fill="none" stroke="currentColor" strokeWidth="1.700"><path d="M8 12H5.500a4.500 5.500 0 0 1 0-11h11a4.500 5.500 0 0 1 0 11H14M8 12q3-1 3-5M11 12q3-1 3-5" /></svg>
      </button>
      <div className="ml-3 flex shrink-0 gap-2 text-[8px] leading-[10px]">
        <span className="text-[#5a5a5c]">L<br />R</span>
        <span className="w-[62px] text-[#c9c9cb]">00030.04.03.00<br />00032.01.01.00</span>
      </div>
      <Stack width="ml-2 w-[26px]" top={<PowerIcon />} bottom="Sync" />
      <Stack width="w-[40px]"
        top={<svg className="h-2 w-7" viewBox="0 0 28 8" fill="none" stroke="#a2a2a4" aria-hidden="true"><path d="M0 2h4l3 3h4M19 1v6M19 4h9M24 2v4" /><path d="M24 4h4" strokeWidth="2.500" /></svg>}
        bottom={<svg className="h-2 w-7" viewBox="0 0 28 8" fill="none" stroke="#b4b4b6" aria-hidden="true"><circle cx="5" cy="4" r="2.300" strokeWidth="1.600" /><path d="M19 4h9M21 1v6M26 1v6M22 4h3" strokeWidth="1.400" /></svg>} />
      <Stack width="ml-px w-10" bottom="Metronome"
        top={<svg className="h-2 w-9" viewBox="0 0 36 8" aria-hidden="true"><circle cx="4" cy="4" r="2.800" fill="#8e8e90" /><path d="M14 1q3 0 3 3l4 3.500" fill="none" stroke="#b4b4b6" strokeWidth="1.500" /><path d="M31 0l4 8h-8zM27 5l-1 3" fill="#b4b4b6" /></svg>} />
      <Stack width="w-[42px]" top="4 / 4" bottom="Timing" />
      <Stack width="w-[20px]" top="-" bottom="Key" />
      <Stack width="w-[48px]" top="0" bottom="Transpose" />
      <Stack width="w-[26px]" top="94.00" bottom="Tempo" />
      <div className="ml-2.5 flex w-[62px] shrink-0 flex-col gap-[5px]">
        <span className="flex w-[39px] flex-col gap-px"><span className="h-[3px] bg-[#75bdd8]" /><span className="h-[3px] bg-[#75bdd8]" /></span>
        <span className="flex h-[6px] items-center">
          <span className="h-[5px] w-[33px] bg-[#3c6a74]" /><span className="h-[5px] w-px bg-[#c4e6ee]" />
          <span className="ml-auto h-[6px] w-[11px] rounded-full border border-[#6bc0cf] bg-linear-to-r from-[#6bc0cf] from-50% to-[#161617] to-50%" />
        </span>
      </div>
      <nav className="ml-2 flex h-full min-w-0 flex-1 items-center justify-end gap-6 bg-[#1f1f20] pr-2 text-[8px] text-[#c4c4c6]">
        <button>Edit</button>
        <button>Mix</button>
        <button>Browse</button>
      </nav>
    </footer>
  )
}

export default function App() {
  return (
    <div className="relative flex h-screen flex-col overflow-hidden bg-[#161617] font-['Liberation_Sans',Arial,sans-serif] select-none">
      <Toolbar />
      <div className="flex min-h-0 flex-1 pr-[5px] pl-1.5">
        <Inspector />
        <Arrange />
      </div>
      <Transport />
      <svg className="absolute top-[65%] right-0 h-2 w-1.5" viewBox="0 0 6 8" fill="#fff" aria-hidden="true"><path d="M3 1v6L0 4zM5 0h1v8H5z" /></svg>
    </div>
  )
}
